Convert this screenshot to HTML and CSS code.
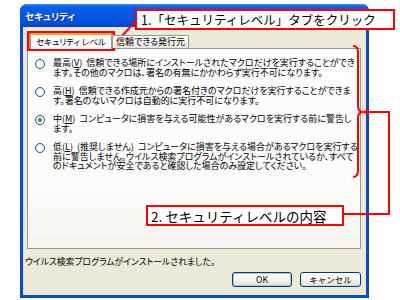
FILE: index.html
```html
<!DOCTYPE html>
<html lang="ja">
<head>
<meta charset="utf-8">
<link rel="stylesheet" href="styles.css">
</head>
<body>
<div class="window">
  <div class="titlebar"><span class="title">セキュリティ</span></div>
  <div class="client">
    <div class="tabs">
      <div class="tab active">セキュリティ レベル</div>
      <div class="tab">信頼できる発行元</div>
    </div>
    <div class="panel">
      <div class="opt"><span class="radio"></span><div class="txt">最高(<span class="u">V</span>)&nbsp;&nbsp;信頼できる場所にインストールされたマクロだけを実行することができ<br>ます。その他のマクロは、署名の有無にかかわらず実行不可になります。</div></div>
      <div class="opt"><span class="radio"></span><div class="txt">高(<span class="u">H</span>)&nbsp;&nbsp;信頼できる作成元からの署名付きのマクロだけを実行することができま<br>す。署名のないマクロは自動的に実行不可になります。</div></div>
      <div class="opt"><span class="radio on"></span><div class="txt">中(<span class="u">M</span>)&nbsp;&nbsp;コンピュータに損害を与える可能性があるマクロを実行する前に警告し<br>ます。</div></div>
      <div class="opt"><span class="radio"></span><div class="txt">低(<span class="u">L</span>)&nbsp;&nbsp;(推奨しません)&nbsp;&nbsp;コンピュータに損害を与える場合があるマクロを実行する<br>前に警告しません。ウイルス検索プログラムがインストールされているか、すべて<br>のドキュメントが安全であると確認した場合のみ設定してください。</div></div>
    </div>
    <div class="status">ウイルス検索プログラムがインストールされました。</div>
    <div class="buttons">
      <div class="btn default">OK</div>
      <div class="btn">キャンセル</div>
    </div>
  </div>
</div>
<div class="callout c1">1.「セキュリティレベル」タブをクリック</div>
<div class="callout c2">2. セキュリティレベルの内容</div>
<svg class="overlay" width="400" height="300" viewBox="0 0 400 300">
  <rect x="28.25" y="32.25" width="85.5" height="17.5" fill="none" stroke="#f00" stroke-width="2.5"/>
  <line x1="136" y1="21" x2="119" y2="39" stroke="#f00" stroke-width="2"/>
  <polygon points="116,42 122.3,39.7 117.9,35.6" fill="#f00"/>
  <path d="M353,46 Q358,46 358,52 L358,106 Q358,112 363,112 Q358,112 358,118 L358,170 Q358,177 353,177" fill="none" stroke="#f00" stroke-width="2"/>
  <polyline points="344,214 389,214 389,112 368,112" fill="none" stroke="#f00" stroke-width="2"/>
  <polygon points="362,112 369,108.5 369,115.5" fill="#f00"/>
</svg>
</body>
</html>
```
FILE: styles.css
```css
html, body {
  margin: 0;
  padding: 0;
}
body {
  width: 400px;
  height: 300px;
  background: #fff;
  position: relative;
  overflow: hidden;
  font-family: "Noto Sans CJK JP", "Noto Sans", sans-serif;
  color: #000;
}
.window {
  margin: 4px 0 0 20px;
  width: 349px;
  height: 294px;
  background: #0a48d8;
  border-radius: 7px 7px 0 0;
  display: flex;
  flex-direction: column;
}
.titlebar {
  height: 23px;
  flex: none;
  border-radius: 7px 7px 0 0;
  background: linear-gradient(#3d8ef8 0%, #0a5ee8 12%, #0557e4 45%, #0453de 80%, #0340cf 100%);
  display: flex;
  align-items: center;
  padding-left: 5px;
}
.title {
  color: #fff;
  font-weight: bold;
  font-size: 9.5px;
  font-feature-settings: "palt";
  text-shadow: 1px 1px #0b2a9a;
}
.client {
  flex: 1;
  margin: 0 3px 3px;
  background: #ece9d8;
  display: flex;
  flex-direction: column;
  padding: 7px 5px 8px 4px;
}
.tabs {
  display: flex;
  align-items: flex-end;
  height: 14px;
  padding-left: 3px;
  position: relative;
  z-index: 1;
}
.tab {
  font-size: 8.5px;
  font-feature-settings: "palt";
  height: 12px;
  line-height: 12px;
  padding: 0 4px;
  border: 1px solid #919b9c;
  border-bottom: none;
  border-radius: 2px 2px 0 0;
  background: linear-gradient(#fff, #f1f0ea 60%, #e5e3da);
  white-space: nowrap;
}
.tab + .tab {
  font-size: 9px;
  padding: 0 3px;
}
.tab.active {
  height: 14px;
  line-height: 13px;
  margin-bottom: -1px;
  padding: 0 5px;
  background: #fcfcfe;
  border-top: 2px solid #f2a93b;
  box-sizing: content-box;
}
.panel {
  height: 201px;
  box-sizing: border-box;
  border: 1px solid #919b9c;
  background: linear-gradient(#fdfdfe, #fbfbfa 70%, #f4f3ee);
  padding: 9px 0 0 7px;
}
.opt {
  display: flex;
  align-items: flex-start;
  margin-bottom: 9px;
}
.radio {
  flex: none;
  width: 8px;
  height: 8px;
  border: 1px solid #1c5180;
  border-radius: 50%;
  background: radial-gradient(circle at 65% 65%, #fff 30%, #e4e1d8 100%);
  margin: 1px 5px 0 0;
  position: relative;
}
.radio.on::after {
  content: "";
  position: absolute;
  left: 2px;
  top: 2px;
  width: 4px;
  height: 4px;
  border-radius: 50%;
  background: #21a121;
}
.txt {
  font-size: 9px;
  line-height: 9.5px;
  font-feature-settings: "palt";
  white-space: nowrap;
  margin-left: 3px;
}
.u {
  text-decoration: underline;
  text-decoration-thickness: 1px;
}
.status {
  margin-top: 8px;
  margin-left: -2px;
  font-size: 8.8px;
  line-height: 10px;
  font-feature-settings: "palt";
  white-space: nowrap;
}
.buttons {
  margin-top: auto;
  display: flex;
  justify-content: flex-end;
  gap: 8px;
}
.btn {
  width: 60px;
  height: 15px;
  box-sizing: border-box;
  border: 1px solid #003c74;
  border-radius: 3px;
  background: linear-gradient(#fff, #f5f4ef 50%, #e6e3d9 90%, #d6d0c5);
  font-size: 8.5px;
  line-height: 13px;
  text-align: center;
}
.btn + .btn {
  width: 61px;
}
.btn.default {
  box-shadow: inset 0 0 0 1px #a9c5f0;
}
.callout {
  position: absolute;
  box-sizing: border-box;
  border: 2px solid #f00;
  background: #fff;
  display: flex;
  align-items: center;
  white-space: nowrap;
  color: #000;
}
.c1 {
  left: 135px;
  top: 9px;
  width: 260px;
  height: 21px;
  padding-left: 4px;
  font-size: 12.5px;
}
.c2 {
  left: 146px;
  top: 205px;
  width: 198px;
  height: 21px;
  padding-left: 3px;
  font-size: 13.5px;
}
.overlay {
  position: absolute;
  left: 0;
  top: 0;
}
```
